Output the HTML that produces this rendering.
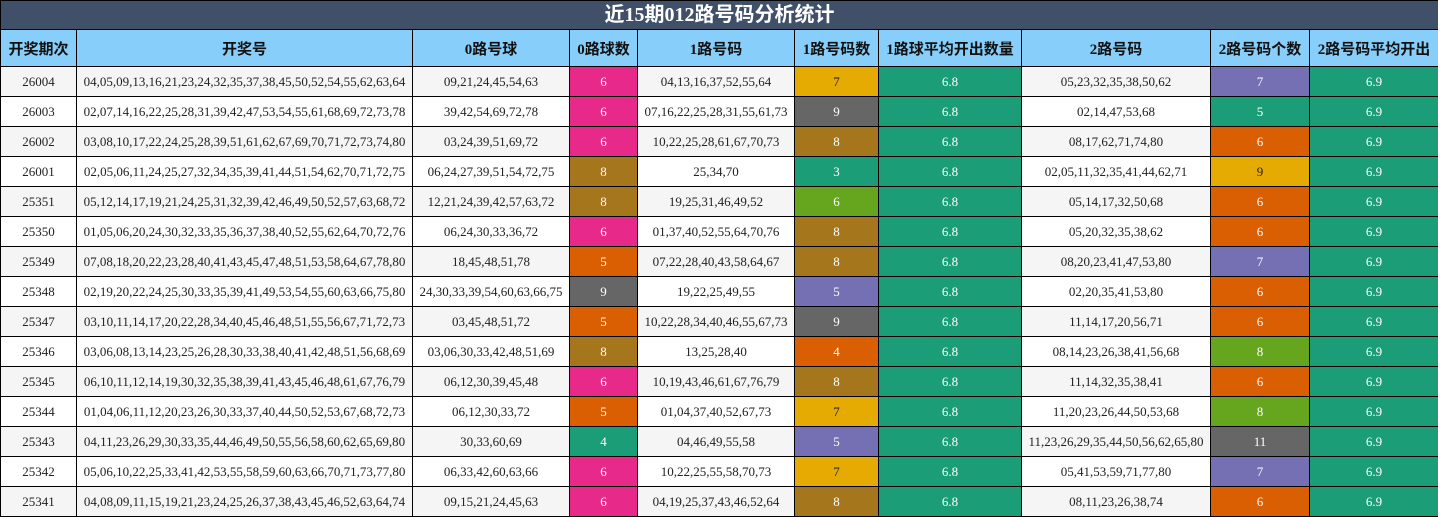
<!DOCTYPE html>
<html><head><meta charset="utf-8"><style>
body{margin:0;background:#fff;}
table{border-collapse:collapse;table-layout:fixed;width:1438px;font-family:"Liberation Serif","Noto Serif CJK SC",serif;font-size:13px;color:#222;}
td,th{border:1px solid #000;text-align:center;padding:0;white-space:nowrap;overflow:hidden;}
.t td{background:#3f5068;color:#fff;font-weight:bold;font-size:20px;height:28px;line-height:28px;font-family:"Liberation Serif","Noto Sans CJK SC",serif;}
.h th{background:#87cefa;color:#111;font-size:15px;font-weight:bold;height:36px;font-family:"Liberation Serif","Noto Sans CJK SC",serif;}
tr.d td{height:29px;}
tr.d:nth-child(odd) td{background:#f5f5f5;}
tr.d:nth-child(even) td{background:#fff;}
tr.d td.c{color:#fff;}
tr.d td.a{background:#1b9e77;color:#fff;}
tr.d td.p{background:#e7298a}tr.d td.b{background:#a6761d}tr.d td.o{background:#d95f02}tr.d td.g{background:#666666}tr.d td.gr{background:#1b9e77}tr.d td.y{background:#e6ab02;color:#222}tr.d td.l{background:#66a61e}tr.d td.v{background:#7570b3}
</style></head><body>
<table>
<colgroup><col style="width:76px"><col style="width:336px"><col style="width:157px"><col style="width:68px"><col style="width:157px"><col style="width:84px"><col style="width:143px"><col style="width:189px"><col style="width:99px"><col style="width:129px"></colgroup>
<tr class="t"><td colspan="10">近15期012路号码分析统计</td></tr>
<tr class="h"><th>开奖期次</th><th>开奖号</th><th>0路号球</th><th>0路球数</th><th>1路号码</th><th>1路号码数</th><th>1路球平均开出数量</th><th>2路号码</th><th>2路号码个数</th><th>2路号码平均开出</th></tr>
<tbody>
<tr class="d"><td>26004</td><td>04,05,09,13,16,21,23,24,32,35,37,38,45,50,52,54,55,62,63,64</td><td>09,21,24,45,54,63</td><td class="c p">6</td><td>04,13,16,37,52,55,64</td><td class="c y">7</td><td class="a">6.8</td><td>05,23,32,35,38,50,62</td><td class="c v">7</td><td class="a">6.9</td></tr>
<tr class="d"><td>26003</td><td>02,07,14,16,22,25,28,31,39,42,47,53,54,55,61,68,69,72,73,78</td><td>39,42,54,69,72,78</td><td class="c p">6</td><td>07,16,22,25,28,31,55,61,73</td><td class="c g">9</td><td class="a">6.8</td><td>02,14,47,53,68</td><td class="c gr">5</td><td class="a">6.9</td></tr>
<tr class="d"><td>26002</td><td>03,08,10,17,22,24,25,28,39,51,61,62,67,69,70,71,72,73,74,80</td><td>03,24,39,51,69,72</td><td class="c p">6</td><td>10,22,25,28,61,67,70,73</td><td class="c b">8</td><td class="a">6.8</td><td>08,17,62,71,74,80</td><td class="c o">6</td><td class="a">6.9</td></tr>
<tr class="d"><td>26001</td><td>02,05,06,11,24,25,27,32,34,35,39,41,44,51,54,62,70,71,72,75</td><td>06,24,27,39,51,54,72,75</td><td class="c b">8</td><td>25,34,70</td><td class="c gr">3</td><td class="a">6.8</td><td>02,05,11,32,35,41,44,62,71</td><td class="c y">9</td><td class="a">6.9</td></tr>
<tr class="d"><td>25351</td><td>05,12,14,17,19,21,24,25,31,32,39,42,46,49,50,52,57,63,68,72</td><td>12,21,24,39,42,57,63,72</td><td class="c b">8</td><td>19,25,31,46,49,52</td><td class="c l">6</td><td class="a">6.8</td><td>05,14,17,32,50,68</td><td class="c o">6</td><td class="a">6.9</td></tr>
<tr class="d"><td>25350</td><td>01,05,06,20,24,30,32,33,35,36,37,38,40,52,55,62,64,70,72,76</td><td>06,24,30,33,36,72</td><td class="c p">6</td><td>01,37,40,52,55,64,70,76</td><td class="c b">8</td><td class="a">6.8</td><td>05,20,32,35,38,62</td><td class="c o">6</td><td class="a">6.9</td></tr>
<tr class="d"><td>25349</td><td>07,08,18,20,22,23,28,40,41,43,45,47,48,51,53,58,64,67,78,80</td><td>18,45,48,51,78</td><td class="c o">5</td><td>07,22,28,40,43,58,64,67</td><td class="c b">8</td><td class="a">6.8</td><td>08,20,23,41,47,53,80</td><td class="c v">7</td><td class="a">6.9</td></tr>
<tr class="d"><td>25348</td><td>02,19,20,22,24,25,30,33,35,39,41,49,53,54,55,60,63,66,75,80</td><td>24,30,33,39,54,60,63,66,75</td><td class="c g">9</td><td>19,22,25,49,55</td><td class="c v">5</td><td class="a">6.8</td><td>02,20,35,41,53,80</td><td class="c o">6</td><td class="a">6.9</td></tr>
<tr class="d"><td>25347</td><td>03,10,11,14,17,20,22,28,34,40,45,46,48,51,55,56,67,71,72,73</td><td>03,45,48,51,72</td><td class="c o">5</td><td>10,22,28,34,40,46,55,67,73</td><td class="c g">9</td><td class="a">6.8</td><td>11,14,17,20,56,71</td><td class="c o">6</td><td class="a">6.9</td></tr>
<tr class="d"><td>25346</td><td>03,06,08,13,14,23,25,26,28,30,33,38,40,41,42,48,51,56,68,69</td><td>03,06,30,33,42,48,51,69</td><td class="c b">8</td><td>13,25,28,40</td><td class="c o">4</td><td class="a">6.8</td><td>08,14,23,26,38,41,56,68</td><td class="c l">8</td><td class="a">6.9</td></tr>
<tr class="d"><td>25345</td><td>06,10,11,12,14,19,30,32,35,38,39,41,43,45,46,48,61,67,76,79</td><td>06,12,30,39,45,48</td><td class="c p">6</td><td>10,19,43,46,61,67,76,79</td><td class="c b">8</td><td class="a">6.8</td><td>11,14,32,35,38,41</td><td class="c o">6</td><td class="a">6.9</td></tr>
<tr class="d"><td>25344</td><td>01,04,06,11,12,20,23,26,30,33,37,40,44,50,52,53,67,68,72,73</td><td>06,12,30,33,72</td><td class="c o">5</td><td>01,04,37,40,52,67,73</td><td class="c y">7</td><td class="a">6.8</td><td>11,20,23,26,44,50,53,68</td><td class="c l">8</td><td class="a">6.9</td></tr>
<tr class="d"><td>25343</td><td>04,11,23,26,29,30,33,35,44,46,49,50,55,56,58,60,62,65,69,80</td><td>30,33,60,69</td><td class="c gr">4</td><td>04,46,49,55,58</td><td class="c v">5</td><td class="a">6.8</td><td>11,23,26,29,35,44,50,56,62,65,80</td><td class="c g">11</td><td class="a">6.9</td></tr>
<tr class="d"><td>25342</td><td>05,06,10,22,25,33,41,42,53,55,58,59,60,63,66,70,71,73,77,80</td><td>06,33,42,60,63,66</td><td class="c p">6</td><td>10,22,25,55,58,70,73</td><td class="c y">7</td><td class="a">6.8</td><td>05,41,53,59,71,77,80</td><td class="c v">7</td><td class="a">6.9</td></tr>
<tr class="d"><td>25341</td><td>04,08,09,11,15,19,21,23,24,25,26,37,38,43,45,46,52,63,64,74</td><td>09,15,21,24,45,63</td><td class="c p">6</td><td>04,19,25,37,43,46,52,64</td><td class="c b">8</td><td class="a">6.8</td><td>08,11,23,26,38,74</td><td class="c o">6</td><td class="a">6.9</td></tr>
</tbody></table>
</body></html>
